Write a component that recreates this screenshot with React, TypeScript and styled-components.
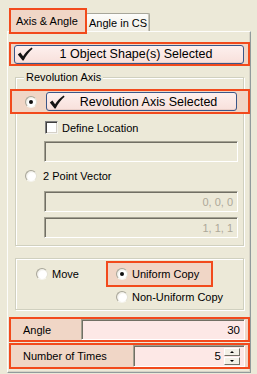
import React from "react";
import styled, { createGlobalStyle, css } from "styled-components";

const Global = createGlobalStyle`
  html, body { margin: 0; padding: 0; background: #ECE9D8; }
  * { box-sizing: border-box; }
  body { font-family: "Liberation Sans", Arial, sans-serif; font-size: 11px; color: #000; }
`;

const RED = "#F24A1C";
const PEACH = "#F0D6C6";

const Root = styled.div`
  width: 257px;
  height: 374px;
  padding-top: 8px;
  background: #ECE9D8;
  overflow: hidden;
`;

const TabBar = styled.div`
  display: flex;
  align-items: flex-end;
  height: 23px;
  padding-left: 9px;
`;

const Tab = styled.div<{ $active?: boolean }>`
  display: flex;
  align-items: center;
  white-space: nowrap;
  ${(p) =>
    p.$active
      ? css`
          position: relative;
          z-index: 2;
          width: 78px;
          height: 26px;
          margin-bottom: -3px;
          padding-left: 5px;
          border: 2px solid ${RED};
          background: ${PEACH};
        `
      : css`
          position: relative;
          z-index: 1;
          width: 64px;
          height: 18px;
          margin-left: -1px;
          padding: 1px 0 0 2px;
          border: 1px solid #A7A69A;
          border-bottom: none;
          border-radius: 2px 2px 0 0;
          background: linear-gradient(#FDFDFB, #EFEDE4);
          box-shadow: inset -1px 0 #C9C7BA;
        `}
`;

const Panel = styled.div`
  margin-left: 7px;
  width: 244px;
  height: 342px;
  border: 1px solid #919B9C;
  border-top-color: #FDFDFB;
  border-left-color: #FDFDFB;
  box-shadow: inset -1px -1px #D6D3C6;
  display: flex;
  flex-direction: column;
`;

const Hilite = styled.div<{ $mt?: number; $h?: number }>`
  display: flex;
  align-items: center;
  margin-top: ${(p) => p.$mt ?? 0}px;
  margin-left: 1px;
  width: 241px;
  height: ${(p) => p.$h ?? 24}px;
  border: 2px solid ${RED};
  background: ${PEACH};
`;

const ObjHilite = styled(Hilite)`
  padding: 0 4px 0 3px;
`;

const SelButton = styled.div<{ $w?: number }>`
  display: flex;
  align-items: center;
  height: 19px;
  width: ${(p) => (p.$w ? `${p.$w}px` : "100%")};
  border: 1px solid #3A5688;
  border-radius: 3px;
  background: linear-gradient(#FDF0EE, #F8E0DB);
  box-shadow: inset 0 -1px #EBCFC9;
  font-size: 12.5px;
  white-space: nowrap;
`;

const CheckIcon = styled.svg`
  flex: none;
  width: 16px;
  height: 14px;
  margin-left: 2px;
`;

const BtnText = styled.span`
  flex: 1;
  text-align: center;
  padding-right: 4px;
`;

const GroupBox = styled.div<{ $mt: number; $pb: number }>`
  position: relative;
  margin: ${(p) => p.$mt}px 6px 0 7px;
  width: 229px;
  padding-bottom: ${(p) => p.$pb}px;
  border: 1px solid #D0D0BF;
  box-shadow: inset 1px 1px #FFFFFF, 1px 1px #FFFFFF;
  display: flex;
  flex-direction: column;
`;

const Caption = styled.span`
  position: absolute;
  top: -7px;
  left: 8px;
  padding: 0 2px;
  line-height: 13px;
  background: #ECE9D8;
`;

const RevHilite = styled(Hilite)`
  margin-left: -6px;
  width: 240px;
  height: 25px;
  padding-left: 13px;
  gap: 9px;
`;

const Radio = styled.span<{ $on?: boolean }>`
  position: relative;
  flex: none;
  width: 12px;
  height: 12px;
  border-radius: 50%;
  border: 1px solid;
  border-color: #A9A79A #E4E2D6 #F6F5EF #A9A79A;
  background: radial-gradient(circle at 60% 60%, #FFFFFF 45%, #DEDBCE 90%);
  ${(p) =>
    p.$on &&
    css`
      &::after {
        content: "";
        position: absolute;
        left: 3px;
        top: 3px;
        width: 4px;
        height: 4px;
        border-radius: 50%;
        background: #111;
      }
    `}
`;

const Row = styled.div<{ $mt: number; $pl: number; $gap: number }>`
  display: flex;
  align-items: center;
  height: 13px;
  margin-top: ${(p) => p.$mt}px;
  padding-left: ${(p) => p.$pl}px;
  gap: ${(p) => p.$gap}px;
  white-space: nowrap;
`;

const CheckBox = styled.span`
  flex: none;
  width: 13px;
  height: 13px;
  border: 1px solid;
  border-color: #808080 #F4F3EE #F4F3EE #808080;
  box-shadow: inset 1px 1px #404040, inset -1px -1px #D4D0C8;
  background: #FFFFFF;
`;

const Field = styled.div<{ $mt: number }>`
  display: flex;
  align-items: center;
  justify-content: flex-end;
  margin-top: ${(p) => p.$mt}px;
  margin-left: 28px;
  width: 194px;
  height: 21px;
  padding-right: 4px;
  border: 1px solid;
  border-color: #A3A192 #FFFFFF #FFFFFF #A3A192;
  box-shadow: inset 1px 1px #716F64;
  color: #ACA899;
  font-size: 11px;
`;

const ModeRow = styled.div`
  display: flex;
  align-items: center;
  margin-top: 2px;
  padding-left: 20px;
`;

const ModeItem = styled.div`
  display: flex;
  align-items: center;
  gap: 4px;
  width: 70px;
  white-space: nowrap;
`;

const UniHilite = styled.div`
  display: flex;
  align-items: center;
  gap: 4px;
  width: 107px;
  height: 26px;
  padding-left: 8px;
  border: 2px solid ${RED};
  background: ${PEACH};
  white-space: nowrap;
`;

const ParamHilite = styled(Hilite)`
  padding: 0 3px 0 12px;
  justify-content: space-between;
  white-space: nowrap;
`;

const ValueField = styled.div<{ $w: number }>`
  display: flex;
  align-items: center;
  justify-content: flex-end;
  align-self: stretch;
  width: ${(p) => p.$w}px;
  padding-right: 4px;
  border: 1px solid;
  border-color: #A3A192 #FFFFFF #FFFFFF #A3A192;
  box-shadow: inset 1px 1px #716F64;
  background: #FDE8E6;
  font-size: 11.5px;
`;

const SpinVal = styled.span`
  margin-right: 3px;
`;

const Spinner = styled.div`
  display: flex;
  flex-direction: column;
  width: 16px;
  height: 17px;
  gap: 1px;
`;

const SpinBtn = styled.div`
  flex: 1;
  display: flex;
  align-items: center;
  justify-content: center;
  background: #F3F0E6;
  border: 1px solid;
  border-color: #FFFFFF #716F64 #716F64 #FFFFFF;
`;

const Arrow = styled.span<{ $up?: boolean }>`
  width: 0;
  height: 0;
  border-left: 2px solid transparent;
  border-right: 2px solid transparent;
  ${(p) => (p.$up ? `border-bottom: 2px solid #000;` : `border-top: 2px solid #000;`)}
`;

const Check = () => (
  <CheckIcon viewBox="0 0 16 14" aria-hidden="true">
    <path
      d="M0.8 7.6 L3.4 5.6 L6.1 9.2 C8.3 5.8 11 3 14.6 0.6 L15.6 1.8 C12.2 4.6 9.4 8.4 6.6 13.4 L5.6 13.4 Z"
      fill="#141414"
    />
  </CheckIcon>
);

export default function App() {
  return (
    <Root>
      <Global />
      <TabBar>
        <Tab $active>Axis &amp; Angle</Tab>
        <Tab>Angle in CS</Tab>
      </TabBar>
      <Panel>
        <ObjHilite $mt={10} $h={24}>
          <SelButton>
            <Check />
            <BtnText>1 Object Shape(s) Selected</BtnText>
          </SelButton>
        </ObjHilite>

        <GroupBox $mt={11} $pb={7}>
          <Caption>Revolution Axis</Caption>
          <RevHilite $mt={11}>
            <Radio $on />
            <SelButton $w={191}>
              <Check />
              <BtnText>Revolution Axis Selected</BtnText>
            </SelButton>
          </RevHilite>
          <Row $mt={7} $pl={29} $gap={4}>
            <CheckBox />
            <span>Define Location</span>
          </Row>
          <Field $mt={7} />
          <Row $mt={7} $pl={9} $gap={6}>
            <Radio />
            <span>2 Point Vector</span>
          </Row>
          <Field $mt={9}>0, 0, 0</Field>
          <Field $mt={5}>1, 1, 1</Field>
        </GroupBox>

        <GroupBox $mt={12} $pb={6}>
          <ModeRow>
            <ModeItem>
              <Radio />
              <span>Move</span>
            </ModeItem>
            <UniHilite>
              <Radio $on />
              <span>Uniform Copy</span>
            </UniHilite>
          </ModeRow>
          <Row $mt={3} $pl={100} $gap={4}>
            <Radio />
            <span>Non-Uniform Copy</span>
          </Row>
        </GroupBox>

        <ParamHilite $mt={7} $h={25}>
          <span>Angle</span>
          <ValueField $w={164}>30</ValueField>
        </ParamHilite>
        <ParamHilite $mt={1} $h={26}>
          <span>Number of Times</span>
          <ValueField $w={112}>
            <SpinVal>5</SpinVal>
            <Spinner>
              <SpinBtn>
                <Arrow $up />
              </SpinBtn>
              <SpinBtn>
                <Arrow />
              </SpinBtn>
            </Spinner>
          </ValueField>
        </ParamHilite>
      </Panel>
    </Root>
  );
}
